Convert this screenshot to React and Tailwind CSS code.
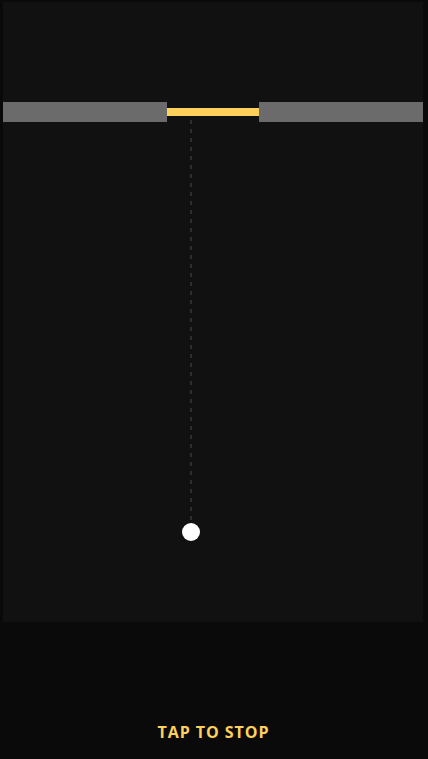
import React from 'react';

const App = () => {
  return (
    <div className="w-[428px] h-[759px] bg-[#0a0a0a] flex flex-col overflow-hidden">
      {/* play field */}
      <div className="relative ml-[3px] mt-[2px] w-[420px] h-[620px] bg-[#111111] flex flex-col">
        <div className="h-[100px]" />

        {/* walls + target */}
        <div className="flex h-[20px]">
          <div className="flex-1 bg-[#6b6b6b]" />
          <div className="w-[92px] flex flex-col pt-[6px]">
            <div className="h-[8px] bg-[#ffd15c]" />
          </div>
          <div className="flex-1 bg-[#6b6b6b]" />
        </div>

        {/* aim guide */}
        <div className="absolute left-[187px] top-[118px] w-[2px] h-[402px] bg-[repeating-linear-gradient(to_bottom,#2e2e2e_0px,#2e2e2e_4px,transparent_4px,transparent_9px)]" />

        {/* ball */}
        <div className="absolute left-[179px] top-[521px] w-[18px] h-[18px] rounded-full bg-white" />
      </div>

      {/* footer hint */}
      <div className="flex-1 flex items-end justify-center pb-[15px] pr-[1px]">
        <span className="font-['Open_Sans',sans-serif] font-bold text-[16px] tracking-[0.06em] text-[#ffd15c]">
          TAP TO STOP
        </span>
      </div>
    </div>
  );
};

export default App;
